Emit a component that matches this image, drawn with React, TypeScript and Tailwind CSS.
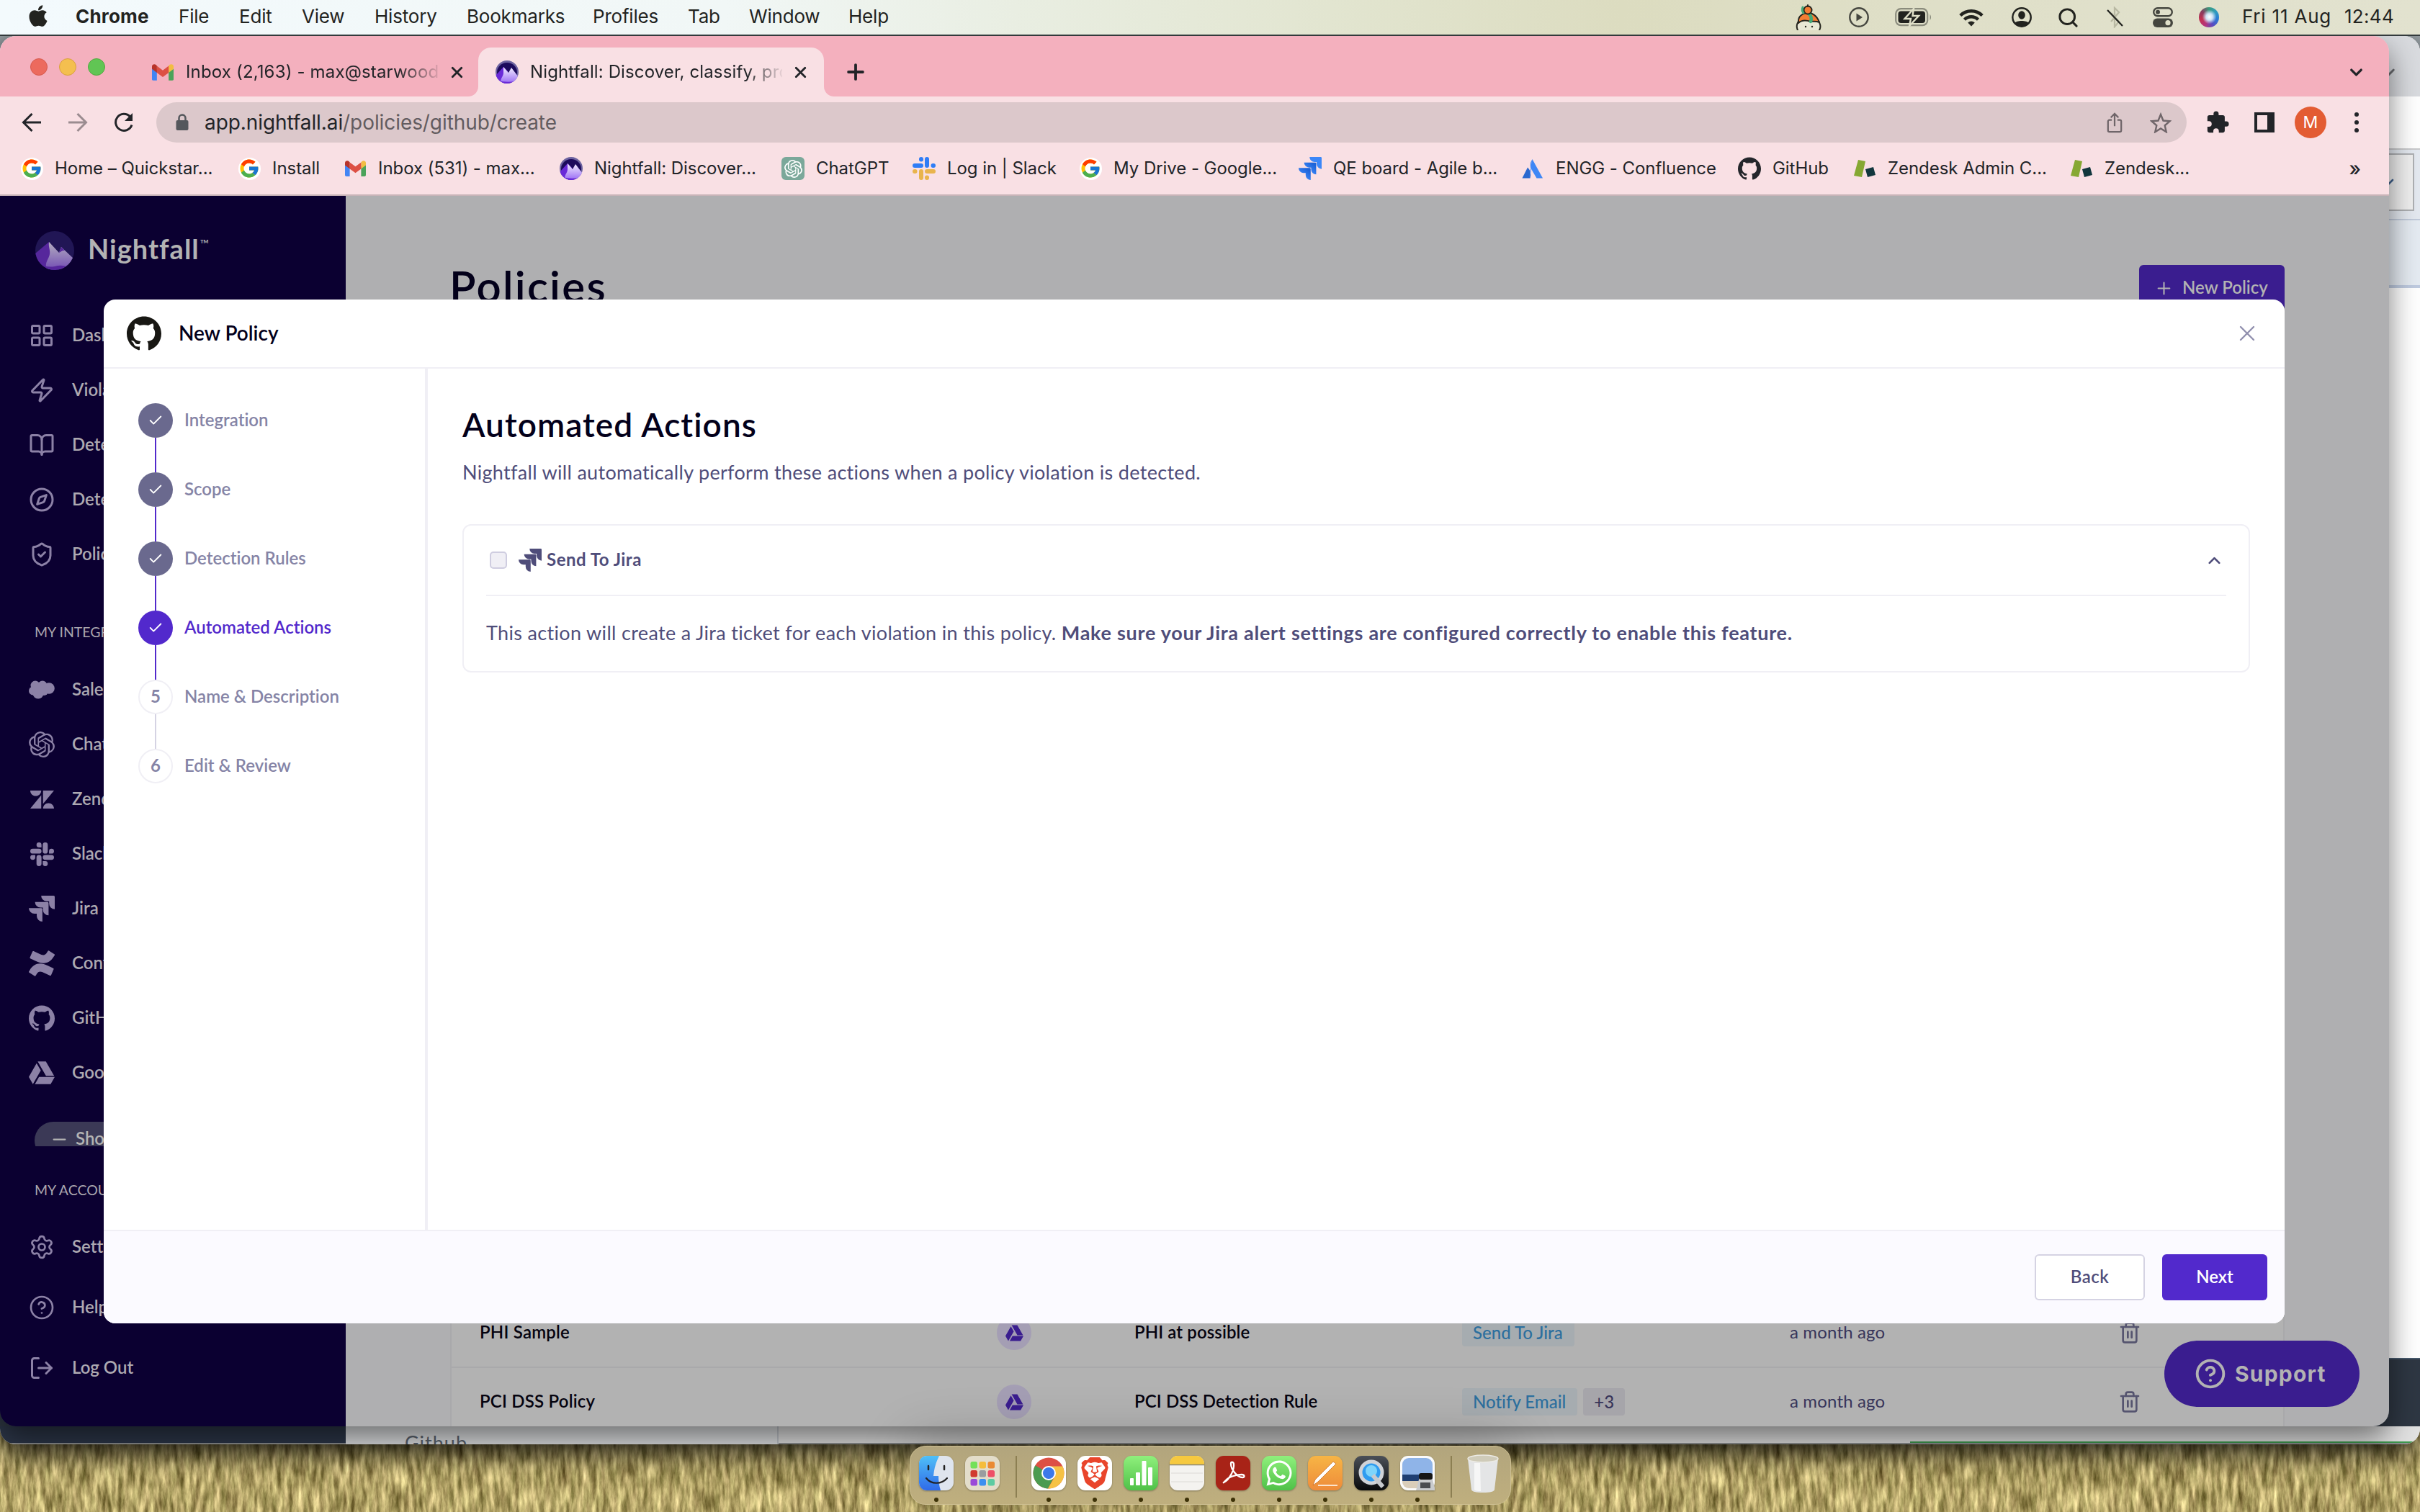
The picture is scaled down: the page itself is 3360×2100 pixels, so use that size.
import React from "react";
import {
  LayoutGrid, Zap, BookOpen, Compass, ShieldCheck, Settings, CircleHelp, LogOut,
  X, Check, Plus, Trash2, ChevronUp, ChevronDown, Search, Minus,
} from "lucide-react";
import { FcGoogle } from "react-icons/fc";
import { FaApple, FaWhatsapp, FaGoogleDrive } from "react-icons/fa";
import { SiZendesk, SiOpenai, SiBrave, SiConfluence, SiGithub, SiSlack } from "react-icons/si";

type IconProps = { className?: string };

/* ---------- logos ---------- */

const JIRA = [
  "M23.013 0H11.455a5.215 5.215 0 0 0 5.215 5.215h2.129v2.057A5.215 5.215 0 0 0 24 12.483V1.005A1.001 1.001 0 0 0 23.013 0Z",
  "M17.294 5.757H5.736a5.215 5.215 0 0 0 5.215 5.214h2.129v2.058a5.218 5.218 0 0 0 5.215 5.214V6.758a1.001 1.001 0 0 0-1.001-1.001z",
  "M11.571 11.513H0a5.218 5.218 0 0 0 5.232 5.215h2.13v2.057A5.215 5.215 0 0 0 12.575 24V12.518a1.005 1.005 0 0 0-1.005-1.005z",
];

const JiraMono = ({ className }: IconProps) => (
  <svg viewBox="0 0 24 24" className={className} fill="currentColor">
    {JIRA.map((d) => <path key={d} d={d} />)}
  </svg>
);

const JiraBlue = ({ className }: IconProps) => (
  <svg viewBox="0 0 24 24" className={className}>
    <defs>
      <linearGradient id="jira-blue" x1="0.9" y1="0" x2="0.3" y2="0.7">
        <stop offset="0.2" stopColor="#1d63d8" />
        <stop offset="1" stopColor="#3b87f8" />
      </linearGradient>
    </defs>
    <path d={JIRA[0]} fill="#3b87f8" />
    <path d={JIRA[1]} fill="url(#jira-blue)" />
    <path d={JIRA[2]} fill="url(#jira-blue)" />
  </svg>
);

const Gmail = ({ className }: IconProps) => (
  <svg viewBox="0 0 32 24" className={className}>
    <path d="M0 4v17.5A2.2 2.2 0 0 0 2.200 24H7.300V9.500z" fill="#4285f4" />
    <path d="M32 4v17.500a2.200 2.200 0 0 1-2.200 2.500H24.700V9.500z" fill="#4ba35a" />
    <path d="M24.700 2.500V12.500L32 7V3.500C32 .3 28.400-.9 26 .9z" fill="#f2bd42" />
    <path d="M7.300 12.500V2.500L16 9l8.700-6.500v10L16 19z" fill="#dd5044" />
    <path d="M0 3.500V7l7.300 5.500v-10L6 .9C3.500-.9 0 .3 0 3.500z" fill="#b8332a" />
  </svg>
);

const GoogleBadge = () => (
  <div className="flex size-[31px] items-center justify-center rounded-full bg-white">
    <FcGoogle className="size-[30px]" />
  </div>
);

const NightfallBadge = ({ className }: IconProps) => (
  <svg viewBox="0 0 32 32" className={className}>
    <defs>
      <clipPath id="nf-round"><circle cx="16" cy="16" r="16" /></clipPath>
      <linearGradient id="nf-peak" x1="0" y1="0" x2="0" y2="1">
        <stop offset="0" stopColor="#f3efff" />
        <stop offset="1" stopColor="#a175f5" />
      </linearGradient>
    </defs>
    <g clipPath="url(#nf-round)">
      <rect width="32" height="32" fill="#6d63a0" />
      <circle cx="16" cy="17" r="14" fill="#1c0a5c" />
      <path d="M0 21 11 9l6 6v17H0z" fill="#6a2ad8" />
      <path d="M11 9l7 8 4-7 10 13v7H7c0-6 4-8 4-13z" fill="url(#nf-peak)" />
      <path d="M4 28q10 3 24 1l-4 4H8z" fill="#6a2ad8" />
    </g>
  </svg>
);

const NightfallDim = ({ className }: IconProps) => (
  <svg viewBox="0 0 54 54" className={className}>
    <defs>
      <clipPath id="nfd-round"><circle cx="27" cy="27" r="27" /></clipPath>
      <linearGradient id="nfd-peak" x1="0" y1="0" x2="0" y2="1">
        <stop offset="0" stopColor="#b3aebf" />
        <stop offset="1" stopColor="#7450b4" />
      </linearGradient>
    </defs>
    <g clipPath="url(#nfd-round)">
      <rect width="54" height="54" fill="#211655" />
      <path d="M0 31 19 15l10 12v27H0z" fill="#56279c" />
      <path d="M19 15l14 15 3-8 18 17-5 14H16c-4-9 3-14 4-21 1-6-2-9-1-17z" fill="url(#nfd-peak)" />
      <path d="M33 30l3-8 5 5-3 0z" fill="#56279c" />
      <path d="M5 45q10 6 22 4 10-3 18 1l-6 6H12z" fill="#56279c" />
    </g>
  </svg>
);

const OpenAiBadge = () => (
  <div className="flex size-8 items-center justify-center rounded-[6px] bg-[#7ba89a] text-white">
    <SiOpenai className="size-[25px]" />
  </div>
);

const SlackTwoTone = () => (
  <svg viewBox="0 0 32 32" className="size-8">
    <g fill="#2f7df6">
      <rect x="9" y="0" width="6" height="6.500" rx="3" />
      <rect x="17" y="0" width="6" height="15" rx="3" />
      <rect x="0" y="9" width="15" height="6" rx="3" />
      <rect x="25.500" y="9" width="6.500" height="6" rx="3" />
    </g>
    <g fill="#e9b44c">
      <rect x="0" y="17" width="6.500" height="6" rx="3" />
      <rect x="9" y="17" width="6" height="15" rx="3" />
      <rect x="17" y="17" width="15" height="6" rx="3" />
      <rect x="17" y="25.500" width="6" height="6.500" rx="3" />
    </g>
  </svg>
);

const Atlassian = () => (
  <svg viewBox="0 0 32 32" className="size-8">
    <path d="M15.500 3 30 29.500H21.500L13 15z" fill="#3f87f5" />
    <path d="M9 14.500q6 6 3.500 15H1.500z" fill="#2a68cf" />
    <path d="M15.500 3 13 8q-1 5 1 10l-3 11.500z" fill="#3f87f5" />
  </svg>
);

const ZendeskLeaf = () => (
  <svg viewBox="0 0 32 32" className="size-8">
    <path d="M7 4 17 6 12 28 1 26z" fill="#86a832" />
    <path d="M17 17 28 14 31 25 20 28z" fill="#12373d" />
  </svg>
);

const Cloud = ({ className }: IconProps) => (
  <svg viewBox="0 0 36 26" className={className} fill="currentColor">
    <circle cx="9" cy="7" r="6.500" /><circle cx="19" cy="7" r="6.500" /><circle cx="28" cy="11" r="7.800" />
    <circle cx="6" cy="14.500" r="6" /><circle cx="13" cy="18" r="7.500" /><circle cx="21" cy="15" r="6" />
    <rect x="8" y="6" width="20" height="12" />
  </svg>
);

/* ---------- menu bar ---------- */

const MENUS: [string, string][] = [
  ["File", "w-[84px]"], ["Edit", "w-[87px]"], ["View", "w-[101px]"], ["History", "w-[128px]"],
  ["Bookmarks", "w-[175px]"], ["Profiles", "w-[132px]"], ["Tab", "w-[85px]"], ["Window", "w-[138px]"], ["Help", ""],
];

const Keybase = () => (
  <svg viewBox="0 0 36 36" className="h-9 w-9" strokeLinecap="round" strokeLinejoin="round">
    <path d="M3 36c-3-6 0-12 3-15h24c4 4 6 10 3 15" fill="#e9e8d6" stroke="#26261f" strokeWidth="2" />
    <path d="M4 26C3 17 8 14 14 12c8-2 16 4 19 13-5-2-8-1-12-1-6-2-12-3-17 2z" fill="#f47d34" stroke="#26261f" strokeWidth="2" />
    <path d="M18 13c4 3 5 6 3 11" fill="none" stroke="#43a877" strokeWidth="4.500" />
    <circle cx="17" cy="8" r="5.500" fill="#f47d34" stroke="#26261f" strokeWidth="2" />
    <path d="M10 4c-1 3-1 6 1 8" stroke="#43a877" strokeWidth="3" fill="none" />
    <path d="M17 3V1" stroke="#26261f" strokeWidth="2" />
    <circle cx="14" cy="31" r="1.200" fill="#26261f" /><circle cx="23" cy="31" r="1.200" fill="#26261f" />
  </svg>
);

const MenuBar = () => (
  <div className="flex h-[48px] shrink-0 items-center bg-[linear-gradient(90deg,#f3fafd_0%,#f1f7f6_30%,#e9eee2_42%,#e2e5d0_55%,#dcdcc0_67%,#dfdfc8_80%,#e2e2cf_100%)] text-[26px] text-[#22231f]">
    <div className="flex w-[105px] items-center pl-[36px]"><FaApple className="size-[34px] -translate-y-[2px]" /></div>
    <div className="w-[143px] pb-[3px] font-bold tracking-[0.2px]">Chrome</div>
    {MENUS.map(([label, width]) => (
      <div key={label} className={`${width} pb-[3px] tracking-[-0.2px]`}>{label}</div>
    ))}
    <div className="ml-auto flex items-center pr-[36px]">
      <Keybase />
      <svg viewBox="0 0 28 28" className="ml-[38px] size-7">
        <circle cx="14" cy="14" r="12.700" fill="none" stroke="#45463f" strokeWidth="2.400" />
        <path d="M10.500 8.500v11L19 14z" fill="#45463f" />
      </svg>
      <svg viewBox="0 0 51 26" className="ml-9 h-[26px] w-[51px]">
        <rect x="1.200" y="1.200" width="44" height="23" rx="7" fill="none" stroke="#8a8b7c" strokeWidth="2.200" />
        <rect x="4.500" y="4.500" width="37.500" height="16.500" rx="4" fill="#22231f" />
        <path d="M48.500 9v8c2-1.500 2-6.500 0-8z" fill="#8a8b7c" />
        <path d="M26 1 13.500 15H22L20 25 33 11H24.500z" fill="#22231f" stroke="#dfdfc8" strokeWidth="2.400" />
      </svg>
      <svg viewBox="0 0 34 25" className="ml-[38px] h-[25px] w-[34px]" fill="none" stroke="#22231f" strokeWidth="4.400">
        <path d="M1.800 9.500a21.500 21.500 0 0 1 30.400 0" />
        <path d="M7.500 15.200a13.500 13.500 0 0 1 19 0" />
        <path d="M17 24.500l-4.800-5a7 7 0 0 1 9.600 0z" fill="#22231f" stroke="none" />
      </svg>
      <svg viewBox="0 0 28 28" className="ml-[39px] size-7">
        <circle cx="14" cy="14" r="12.700" fill="none" stroke="#22231f" strokeWidth="2.500" />
        <ellipse cx="14" cy="11" rx="4.800" ry="5.800" fill="#22231f" />
        <path d="M4 22c3-4 17-4 20 0-4 7-16 7-20 0z" fill="#22231f" />
      </svg>
      <Search className="ml-[35px] size-[31px]" strokeWidth={2.300} />
      <svg viewBox="0 0 24 30" className="ml-[38px] h-[30px] w-6" fill="none">
        <path d="M6 9l11 12-6 7V2l6 6L6 21" stroke="#b9b9a3" strokeWidth="2.300" />
        <path d="M1 5l21 22" stroke="#22231f" strokeWidth="2.300" />
      </svg>
      <svg viewBox="0 0 28 28" className="ml-[40px] size-7">
        <rect x="1.200" y="1.200" width="25.600" height="11" rx="5.500" fill="none" stroke="#45463f" strokeWidth="2.400" />
        <circle cx="7" cy="6.700" r="3" fill="#45463f" />
        <rect x="0" y="15.500" width="28" height="12.500" rx="6.200" fill="#45463f" />
        <circle cx="21" cy="21.700" r="3.600" fill="#dfdfc8" />
      </svg>
      <div className="ml-9 size-7 rounded-full bg-[radial-gradient(circle_at_52%_48%,#ffffff_0%,#cfe3f5_22%,transparent_48%),conic-gradient(from_0deg,#3b9b7d,#2d9cc0,#2a7ad6,#5a4ac0,#b5347c,#c3304f,#8a3a5f,#3b9b7d)]" />
      <div className="ml-[32px] w-[142px] pb-[3px] tracking-[0.8px]">Fri 11 Aug</div>
      <div className="pb-[3px] tracking-[0.3px]">12:44</div>
    </div>
  </div>
);

/* ---------- browser chrome ---------- */

const TabStrip = () => (
  <div className="flex h-[84px] shrink-0 items-end bg-[#f4b0be] text-[24px] text-[#222428]">
    <div className="flex h-[68px] w-[211px] items-center gap-[16px] pb-[14px] pl-[42px]">
      <div className="size-6 rounded-full border border-[#d65a4e] bg-[#ec6a5e]" />
      <div className="size-6 rounded-full border border-[#d9a03f] bg-[#f4bf4f]" />
      <div className="size-6 rounded-full border border-[#52a840] bg-[#61c554]" />
    </div>
    <div className="flex h-[68px] w-[453px] items-center">
      <Gmail className="h-[23px] w-[30px]" />
      <div className="ml-[17px] w-[351px] overflow-hidden whitespace-nowrap tracking-[0.16px] [mask-image:linear-gradient(to_right,black_84%,transparent_102%)]">Inbox (2,163) - max@starwood</div>
      <X className="ml-[13px] size-[25px]" strokeWidth={2.700} />
    </div>
    <div className="relative flex h-[68px] w-[480px] items-center rounded-t-[18px] bg-[#f9e0e4] pl-[24px]">
      <svg viewBox="0 0 14 14" className="absolute bottom-0 -left-[14px] size-[14px]"><path d="M14 0v14H0A14 14 0 0 0 14 0z" fill="#f9e0e4" /></svg>
      <svg viewBox="0 0 14 14" className="absolute -right-[14px] bottom-0 size-[14px]"><path d="M0 0v14h14A14 14 0 0 1 0 0z" fill="#f9e0e4" /></svg>
      <NightfallBadge className="size-8" />
      <div className="ml-[16px] w-[350px] overflow-hidden whitespace-nowrap tracking-[0.12px] [mask-image:linear-gradient(to_right,black_86%,transparent_101%)]">Nightfall: Discover, classify, pro</div>
      <X className="ml-[13px] size-[25px]" strokeWidth={2.700} />
    </div>
    <div className="flex h-[68px] flex-1 items-center justify-between pr-[32px] pl-[27px]">
      <Plus className="size-[34px]" strokeWidth={2.700} />
      <ChevronDown className="size-[27px]" strokeWidth={3} />
    </div>
  </div>
);

const AddressBar = () => (
  <div className="flex h-[72px] shrink-0 items-center bg-[#f9e0e4] text-[#222428]">
    <div className="flex w-[217px] items-center pl-[30px]" >
      <svg viewBox="0 0 28 28" className="size-7" fill="none" stroke="#222428" strokeWidth="3"><path d="M27 14H3M14.500 2 2.500 14l12 12" /></svg>
      <svg viewBox="0 0 28 28" className="ml-9 size-7" fill="none" stroke="#9b8c90" strokeWidth="3"><path d="M1 14h24M13.500 2l12 12-12 12" /></svg>
      <svg viewBox="0 0 28 28" className="ml-9 size-7" fill="none" stroke="#222428" strokeWidth="3"><path d="M25 17.500A11.500 11.500 0 1 1 22.500 6" /><path d="M26 1v11H15z" fill="#222428" stroke="none" /></svg>
    </div>
    <div className="flex h-[56px] w-[2819px] items-center rounded-full bg-[#dcc8cb] pr-[21px] pl-[27px] text-[28px]">
      <svg viewBox="0 0 18 24" className="mr-[22px] h-[24px] w-[18px]"><rect x="0.500" y="9" width="17" height="14" rx="2" fill="#54575c" /><path d="M4.500 10V6a4.500 4.500 0 0 1 9 0v4" fill="none" stroke="#54575c" strokeWidth="2.500" /></svg>
      <div className="tracking-[-0.08px]">app.nightfall.ai<span className="text-[#635c60]">/policies/github/create</span></div>
      <svg viewBox="0 0 22 30" className="ml-auto h-[29px] w-[22px]" fill="none" stroke="#6f6569" strokeWidth="2.300"><path d="M7 11H3.500A2 2 0 0 0 1.500 13v13a2 2 0 0 0 2 2h15a2 2 0 0 0 2-2V13a2 2 0 0 0-2-2H15M11 20V3M5.500 7.500 11 2l5.500 5.500" /></svg>
      <svg viewBox="0 0 30 29" className="ml-[38px] h-[29px] w-[30px]" fill="none" stroke="#6f6569" strokeWidth="2.400"><path d="M15 3l3.500 8.500 9 .8-6.800 6 2 8.900L15 22.500l-7.700 4.700 2-8.900-6.800-6 9-.8z" /></svg>
    </div>
    <svg viewBox="0 0 24 24" className="ml-[26px] size-[34px]" fill="#222428"><path d="M20.500 11H19V7a2 2 0 0 0-2-2h-4V3.500a2.500 2.500 0 0 0-5 0V5H4a2 2 0 0 0-2 2v3.800h1.500a2.700 2.700 0 0 1 0 5.400H2V20a2 2 0 0 0 2 2h3.800v-1.500a2.700 2.700 0 0 1 5.400 0V22H17a2 2 0 0 0 2-2v-4h1.500a2.500 2.500 0 0 0 0-5z" /></svg>
    <svg viewBox="0 0 28 28" className="ml-[34px] size-7"><path d="M0 0h28v28H0zM4 4v20h14V4z" fill="#222428" fillRule="evenodd" /></svg>
    <div className="ml-[28px] flex size-11 items-center justify-center rounded-full bg-[#e35c33] text-[23px] text-white">M</div>
    <div className="ml-[39px] flex flex-col gap-[5px]">
      <div className="size-[6px] rounded-full bg-[#222428]" />
      <div className="size-[6px] rounded-full bg-[#222428]" />
      <div className="size-[6px] rounded-full bg-[#222428]" />
    </div>
  </div>
);

const BOOKMARKS: { label: string; icon: React.ReactNode; width: string }[] = [
  { label: "Home – Quickstar...", icon: <GoogleBadge />, width: "w-[302px]" },
  { label: "Install", icon: <GoogleBadge />, width: "w-[147px]" },
  { label: "Inbox (531) - max...", icon: <Gmail className="h-[22px] w-[29px]" />, width: "w-[300px]" },
  { label: "Nightfall: Discover...", icon: <NightfallBadge className="size-8" />, width: "w-[308px]" },
  { label: "ChatGPT", icon: <OpenAiBadge />, width: "w-[182px]" },
  { label: "Log in | Slack", icon: <SlackTwoTone />, width: "w-[231px]" },
  { label: "My Drive - Google...", icon: <GoogleBadge />, width: "w-[305px]" },
  { label: "QE board - Agile b...", icon: <JiraBlue className="size-8" />, width: "w-[309px]" },
  { label: "ENGG - Confluence", icon: <Atlassian />, width: "w-[301px]" },
  { label: "GitHub", icon: <SiGithub className="size-8 text-[#24262b]" />, width: "w-[160px]" },
  { label: "Zendesk Admin C...", icon: <ZendeskLeaf />, width: "w-[301px]" },
  { label: "Zendesk...", icon: <ZendeskLeaf />, width: "w-[200px]" },
];

const BookmarkBar = () => (
  <div className="flex h-[66px] shrink-0 items-center border-b-2 border-[#c9b4b8] bg-[#f9e0e4] pb-[8px] pl-[28px] text-[24px] tracking-[-0.05px] text-[#222428]">
    {BOOKMARKS.map((b) => (
      <div key={b.label} className={`${b.width} flex shrink-0 items-center gap-[16px] whitespace-nowrap`}>
        <div className="flex w-8 justify-center">{b.icon}</div>
        {b.label}
      </div>
    ))}
    <div className="ml-auto pr-[39px] text-[27px] leading-none font-medium">»</div>
  </div>
);

/* ---------- app behind the dialog ---------- */

const SideItem = ({ icon, label, height }: { icon: React.ReactNode; label: string; height: string }) => (
  <div className={`${height} flex items-center whitespace-nowrap text-[24px] font-semibold text-[#ada9b1]`}>
    <div className="flex w-[100px] justify-start pl-10"><div className="flex w-9 justify-center text-[#8c81a6]">{icon}</div></div>
    <div className="pb-0.5">{label}</div>
  </div>
);

const Sidebar = () => (
  <div className="flex w-[480px] shrink-0 flex-col bg-[#0b0031] font-[Lato]">
    <div className="flex h-[156px] items-center pb-1 pl-[49px]">
      <NightfallDim className="size-[54px] shrink-0" />
      <div className="ml-[19px] pb-1.5 text-[38px] font-bold tracking-[1px] text-[#b3b3b3]">Nightfall</div>
      <div className="ml-[1px] pb-[18px] text-[17px] text-[#b3b3b3]">™</div>
    </div>
    <SideItem height="h-[76px]" icon={<LayoutGrid className="size-9" />} label="Dashboard" />
    <SideItem height="h-[76px]" icon={<Zap className="size-9" />} label="Violations" />
    <SideItem height="h-[76px]" icon={<BookOpen className="size-9" />} label="Detection Rules" />
    <SideItem height="h-[76px]" icon={<Compass className="size-9" />} label="Detectors" />
    <SideItem height="h-[76px]" icon={<ShieldCheck className="size-9" />} label="Policies" />
    <div className="flex h-[112px] items-center pt-[27px] pl-[48px] text-[19.500px] text-[#aaa6ae]">MY INTEGRATIONS</div>
    <SideItem height="h-[76px]" icon={<Cloud className="h-[26px] w-9" />} label="Salesforce" />
    <SideItem height="h-[76px]" icon={<SiOpenai className="size-9" />} label="ChatGPT" />
    <SideItem height="h-[76px]" icon={<SiZendesk className="size-[33px]" />} label="Zendesk" />
    <SideItem height="h-[76px]" icon={<SiSlack className="size-[33px]" />} label="Slack" />
    <SideItem height="h-[76px]" icon={<JiraMono className="size-9" />} label="Jira" />
    <SideItem height="h-[76px]" icon={<SiConfluence className="size-9" />} label="Confluence" />
    <SideItem height="h-[76px]" icon={<SiGithub className="size-9" />} label="GitHub" />
    <SideItem height="h-[76px]" icon={<FaGoogleDrive className="size-9" />} label="Google Drive" />
    <div className="mt-[30px] ml-[48px] h-[34px] w-[380px] overflow-hidden">
      <div className="flex h-[52px] items-center rounded-full bg-[#3b3956] pl-[21px] text-[24px] font-semibold text-[#b3b3b3]">
        <Minus className="mr-[9px] size-[27px] -translate-y-[2px]" strokeWidth={2} />
        <div className="pb-1.5">Show less</div>
      </div>
    </div>
    <div className="flex h-[98px] items-center pt-[24px] pl-[48px] text-[19.500px] text-[#aaa6ae]">MY ACCOUNT</div>
    <SideItem height="h-[84px]" icon={<Settings className="size-9" strokeWidth={1.800} />} label="Settings" />
    <SideItem height="h-[84px]" icon={<CircleHelp className="size-9" strokeWidth={1.800} />} label="Help Center" />
    <SideItem height="h-[84px]" icon={<LogOut className="size-9" />} label="Log Out" />
  </div>
);

const PolicyRow = ({ name, rule, action, extra }: { name: string; rule: string; action: string; extra?: string }) => (
  <div className="grid h-[96px] shrink-0 grid-cols-[718px_191px_455px_455px_456px_1fr] items-center border-r-2 border-b-2 border-l-2 border-[#a9a9ab] bg-[#b2b2b2] pl-[39px] text-[24px] whitespace-nowrap">
    <div className="pb-0.5 font-semibold tracking-[0.2px] text-[#05030f]">{name}</div>
    <div className="flex size-12 items-center justify-center rounded-full bg-[#a49eb4] text-[#3a1d8f]"><FaGoogleDrive className="size-[25px]" /></div>
    <div className="pb-0.5 font-semibold tracking-[0.1px] text-[#05030f]">{rule}</div>
    <div className="flex gap-2">
      <div className="flex h-[38px] items-center rounded-[4px] bg-[#a6acb0] pr-4 pb-px pl-[15px] font-medium text-[#2c6f9e]">{action}</div>
      {extra && <div className="flex h-[38px] items-center rounded-[4px] bg-[#a6a5aa] px-[15px] pb-px font-medium text-[#37355a]">{extra}</div>}
    </div>
    <div className="pb-0.5 tracking-[0.15px] text-[#37355a]">a month ago</div>
    <Trash2 className="size-[32px] text-[#55546f]" strokeWidth={2} />
  </div>
);

const PoliciesPage = () => (
  <div className="flex flex-1 flex-col overflow-hidden bg-[#afafb1] font-[Lato]">
    <div className="flex h-[1532px] shrink-0 items-start justify-between pt-[96px] pr-[145px] pl-[144px]">
      <div className="text-[60px] leading-[58px] font-semibold tracking-[2.300px] text-[#03001a]">Policies</div>
      <div className="flex h-[64px] w-[202px] items-center rounded-[6px] bg-[#3a1d8f] pl-[21px] text-[24px] font-semibold text-[#b3b3b3]">
        <Plus className="size-[27px]" strokeWidth={1.800} />
        <div className="ml-[12px] pb-0.5 whitespace-nowrap">New Policy</div>
      </div>
    </div>
    <div className="mr-[145px] ml-[145px]">
      <PolicyRow name="PHI Sample" rule="PHI at possible" action="Send To Jira" />
      <PolicyRow name="PCI DSS Policy" rule="PCI DSS Detection Rule" action="Notify Email" extra="+3" />
    </div>
  </div>
);

/* ---------- dialog ---------- */

const STEPS = [
  { label: "Integration", state: "done" },
  { label: "Scope", state: "done" },
  { label: "Detection Rules", state: "done" },
  { label: "Automated Actions", state: "current" },
  { label: "Name & Description", state: "todo" },
  { label: "Edit & Review", state: "todo" },
];

const circleStyle: Record<string, string> = {
  done: "bg-[#6a698e] text-white",
  current: "bg-[#5229cc] text-white",
  todo: "border-2 border-[#f0eff5] bg-white text-[#8584a6]",
};

const Dialog = () => (
  <div className="absolute top-[416px] left-[144px] flex h-[1422px] w-[3028px] flex-col overflow-hidden rounded-[16px] bg-white font-[Lato]">
    <div className="flex h-[96px] shrink-0 items-center border-b-2 border-[#f0eff5] pr-[34px] pl-[32px]">
      <SiGithub className="size-[48px] text-[#181713]" />
      <div className="ml-[24px] pb-0.5 text-[28px] font-semibold text-[#03001a]">New Policy</div>
      <X className="ml-auto size-[36px] text-[#9190ae]" strokeWidth={1.600} />
    </div>
    <div className="flex flex-1">
      <div className="flex w-[450px] shrink-0 flex-col border-r-4 border-[#f0eff5] pt-[48px] pl-[48px]">
        {STEPS.map((s, i) => (
          <div key={s.label} className="flex">
            <div className="flex w-[48px] flex-col items-center">
              <div className={`${circleStyle[s.state]} flex size-[48px] items-center justify-center rounded-full text-[24px] font-bold`}>
                {s.state === "todo" ? <span className="pb-0.5">{i + 1}</span> : <Check className="size-[22px]" strokeWidth={2} />}
              </div>
              {i < 5 && <div className={`${i < 4 ? "bg-[#5229cc]" : "bg-[#d5d3e3]"} h-[48px] w-[2px]`} />}
            </div>
            <div className={`${s.state === "current" ? "text-[#5229cc]" : "text-[#8584a6]"} ml-[16px] flex h-[48px] items-center pb-0.5 text-[24px] font-semibold whitespace-nowrap`}>{s.label}</div>
          </div>
        ))}
      </div>
      <div className="flex-1 pt-[50px] pr-[48px] pl-[48px]">
        <div className="text-[46px] leading-[56px] font-semibold tracking-[1.050px] text-[#03001a]">Automated Actions</div>
        <div className="mt-[20px] text-[27px] leading-[36px] tracking-[0.310px] text-[#4f4d7a]">Nightfall will automatically perform these actions when a policy violation is detected.</div>
        <div className="mt-[54px] h-[206px] rounded-[12px] border-2 border-[#f0eff5] px-[31px] text-[#4f4d7a]">
          <div className="flex h-[98px] items-center border-b-2 border-[#f0eff5] pr-[3px] pl-[5px]">
            <div className="size-[24px] rounded-[5px] border-2 border-[#cfcde0] bg-[#f0eff5]" />
            <JiraMono className="ml-4 size-8" />
            <div className="ml-[7px] pb-0.5 text-[24px] font-bold tracking-[0.500px]">Send To Jira</div>
            <ChevronUp className="ml-auto size-[27px]" strokeWidth={2.400} />
          </div>
          <div className="pt-[33px] text-[27px] leading-[36px] tracking-[0.330px] whitespace-nowrap">
            This action will create a Jira ticket for each violation in this policy.{" "}
            <span className="font-bold tracking-[0.720px]">Make sure your Jira alert settings are configured correctly to enable this feature.</span>
          </div>
        </div>
      </div>
    </div>
    <div className="flex h-[130px] shrink-0 items-start justify-end gap-[24px] border-t-2 border-[#f0eff5] bg-[#fbfaff] pt-[32px] pr-[24px] text-[24px] font-semibold">
      <div className="flex h-[64px] w-[153px] items-center justify-center rounded-[6px] border-2 border-[#d5d3e3] bg-white pb-0.5 tracking-[0.500px] text-[#4f4d7a]">Back</div>
      <div className="flex h-[64px] w-[146px] items-center justify-center rounded-[6px] bg-[#5229cc] pb-0.5 text-white">Next</div>
    </div>
  </div>
);

/* ---------- dock ---------- */

const Squircle = ({ children, fill }: { children?: React.ReactNode; fill: string }) => (
  <svg viewBox="0 0 48 48" className="size-[48px] shrink-0 drop-shadow-[0_1px_1px_rgba(0,0,0,0.3)]">
    <rect width="48" height="48" rx="11" fill={fill} />
    {children}
  </svg>
);

const LAUNCHPAD = ["#74e05a", "#f5bd3c", "#ea8a34", "#d03a30", "#9a9da0", "#ee4f67", "#9a4ad8", "#3b8ff0", "#5ccba2"];

const DOCK_APPS: React.ReactNode[] = [
  <Squircle fill="#ffffff">
    <circle cx="24" cy="24" r="21.500" fill="#dd5044" />
    <path d="M24 24 5.400 13.300A21.500 21.500 0 0 0 23 45.500l9-17z" fill="#4b9b50" />
    <path d="M24 14.500h19.300A21.500 21.500 0 0 1 23 45.500L33 28z" fill="#f6c244" />
    <circle cx="24" cy="24" r="10" fill="#fff" /><circle cx="24" cy="24" r="8" fill="#3c78e8" />
  </Squircle>,
  <Squircle fill="#ffffff"><SiBrave x={2} y={2} color="#e9452b" size={44} /></Squircle>,
  <Squircle fill="url(#dock-green)">
    <g fill="#fff"><rect x="9" y="31" width="5" height="10" rx="1" /><rect x="17" y="23" width="6" height="18" rx="1" /><rect x="25.500" y="7" width="6" height="34" rx="1" /><rect x="34" y="16" width="6" height="25" rx="1" /></g>
  </Squircle>,
  <Squircle fill="#f4f3f0">
    <path d="M0 12V11A11 11 0 0 1 11 0H37A11 11 0 0 1 48 11v1z" fill="#f6c93f" />
    <path d="M0 12.500h48" stroke="#8a8776" strokeWidth="1.500" /><path d="M2 24h44M2 36h44" stroke="#dcdad6" />
  </Squircle>,
  <Squircle fill="#a82317">
    <path d="M11 37c8-4 15-17 14-26-1-3-4-3-4 0 0 8 9 19 16 19 4 0 3-4-1-4-9 0-19 4-22 8-2 2-4 4-3 3z" fill="none" stroke="#fff" strokeWidth="2.300" />
  </Squircle>,
  <Squircle fill="url(#dock-green)"><FaWhatsapp x={4} y={4} size={40} color="#ffffff" /></Squircle>,
  <Squircle fill="url(#dock-orange)">
    <path d="M7 41 10 33 35 8l4 3L14 36z" fill="#fff" stroke="#c96f25" strokeWidth="0.800" /><path d="M14 41h27" stroke="#fff" strokeWidth="1.500" />
  </Squircle>,
  <Squircle fill="url(#dock-dark)">
    <circle cx="24" cy="23" r="15" fill="#2f9cf0" stroke="#d0d3d8" strokeWidth="5" />
    <circle cx="24" cy="21" r="8" fill="#7ed4fb" /><path d="M26 27 40 43" stroke="#c6c9ce" strokeWidth="6" />
  </Squircle>,
  <Squircle fill="#fbfbfb">
    <path d="M3 12a9 9 0 0 1 9-9h24a9 9 0 0 1 9 9v15H3z" fill="#8fb4e8" /><rect x="3" y="26" width="42" height="9" fill="#1f3f73" />
    <path d="M3 35h30l-8 10H12a9 9 0 0 1-9-9z" fill="#d9cdb9" />
    <path d="M27 25h17l1 8 4 15H22l4-15z" fill="#c9cbcd" /><rect x="26" y="24" width="19" height="9" rx="3" fill="#161616" /><rect x="28" y="37" width="14" height="8" fill="#4a4c50" />
  </Squircle>,
];

const Dock = () => (
  <div className="absolute top-[2008px] left-[1263px] flex h-[82px] w-[835px] items-start rounded-[22px] border border-[#cdbf92] bg-[linear-gradient(180deg,#b2a57d,#bfaf7e)] pt-[13px] pl-[12px] shadow-[0_-10px_70px_rgba(0,0,0,0.22)]">
    <svg className="absolute size-0">
      <defs>
        <linearGradient id="dock-green" x1="0" y1="0" x2="0" y2="1"><stop stopColor="#8ff07c" /><stop offset="1" stopColor="#4fc148" /></linearGradient>
        <linearGradient id="dock-orange" x1="0" y1="0" x2="0" y2="1"><stop stopColor="#f7b545" /><stop offset="1" stopColor="#ee8b3a" /></linearGradient>
        <linearGradient id="dock-dark" x1="0" y1="0" x2="0" y2="1"><stop stopColor="#4b5058" /><stop offset="1" stopColor="#08090b" /></linearGradient>
        <linearGradient id="dock-blue" x1="0" y1="0" x2="0" y2="1"><stop stopColor="#4fc0f8" /><stop offset="1" stopColor="#2f6ae8" /></linearGradient>
      </defs>
    </svg>
    <div className="flex w-16 flex-col items-start gap-[10px]">
      <Squircle fill="#dfe5ee">
        <path d="M11 0H28C23 10 21 18 20 28h7c0 7 1 14 3 20H11A11 11 0 0 1 0 37V11A11 11 0 0 1 11 0z" fill="url(#dock-blue)" />
        <path d="M13 14v5M35 14v5" stroke="#222" strokeWidth="2.500" strokeLinecap="round" /><path d="M10 31c7 9 21 9 29 0" fill="none" stroke="#222" strokeWidth="2.200" strokeLinecap="round" />
      </Squircle>
      <div className="ml-[21px] size-[6px] rounded-full bg-[#3d3208]" />
    </div>
    <Squircle fill="#e3ddca">
      {LAUNCHPAD.map((c, i) => <rect key={c} x={7.500 + (i % 3) * 12} y={8 + Math.floor(i / 3) * 12} width="9.500" height="9.500" rx="2.500" fill={c} />)}
    </Squircle>
    <div className="mr-[20px] ml-[22px] h-[58px] w-[2px] bg-[#8c7f52]" />
    {DOCK_APPS.map((app, i) => (
      <div key={i} className="flex w-16 flex-col items-start gap-[10px]">
        {app}
        <div className="ml-[21px] size-[6px] rounded-full bg-[#3d3208]" />
      </div>
    ))}
    <div className="mr-[21px] ml-[6px] h-[58px] w-[2px] bg-[#8c7f52]" />
    <svg viewBox="0 0 44 54" className="-mt-[2px] h-[54px] w-[44px]">
      <path d="M1 6h42l-5 43q-1 4-16 4T6 49z" fill="#e4e5e6" /><path d="M10 12h8l1 39q-7 0-9-2z" fill="#f6f6f6" />
      <ellipse cx="22" cy="6" rx="21" ry="5" fill="#cfcbb9" stroke="#eceae4" strokeWidth="1.500" />
    </svg>
  </div>
);

/* ---------- desktop ---------- */

const Wallpaper = () => (
  <div className="absolute top-[1960px] left-0 h-[140px] w-[3360px] bg-[#b5a468]">
    <svg className="h-full w-full">
      <filter id="grass" x="0" y="0" width="100%" height="100%" colorInterpolationFilters="sRGB">
        <feTurbulence type="fractalNoise" baseFrequency="0.140 0.028" numOctaves="5" seed="7" />
        <feColorMatrix values="0.850 0 0 0 0.270  0.820 0.050 0 0 0.200  0.700 0 0 0 0.050  0 0 0 0 1" />
      </filter>
      <rect width="100%" height="100%" filter="url(#grass)" />
    </svg>
  </div>
);

const BackWindow = () => (
  <div className="absolute top-[50px] left-0 flex h-[1956px] w-[3360px] flex-col overflow-hidden rounded-[22px] bg-[#f6f7f8] shadow-[0_14px_36px_rgba(0,0,0,0.75)]">
    <div className="flex h-[84px] shrink-0 items-center justify-end bg-[#d9dbdf] pt-4 pr-[30px] text-[#6a6c70]"><ChevronDown className="size-[27px]" strokeWidth={2.600} /></div>
    <div className="h-[74px] shrink-0 border-b-2 border-[#c8c9cb] bg-white" />
    <div className="h-[98px] shrink-0 border-b-2 border-[#c0cada] bg-[#e4e9f0] pt-[5px] pr-[8px]">
      <div className="flex h-[80px] items-center justify-end border-2 border-[#aeb0b3] bg-[#f0f0f0] pr-[22px] text-[#42648f]"><ChevronDown className="size-[24px]" strokeWidth={2.600} /></div>
    </div>
    <div className="h-[94px] shrink-0 border-b-4 border-[#bfcbe0] bg-[#e5ebf2]" />
    <div className="flex-1 bg-white" />
    <div className="h-[95px] shrink-0 border-t-2 border-[#46586b] bg-[#2e3743]" />
    <div className="flex h-[25px] shrink-0 border-b-2 border-[#8e9092]">
      <div className="w-[480px] bg-[#2c3648]" />
      <div className="h-[25px] w-[601px] overflow-hidden border-r-2 border-[#c2c6cc] bg-[#dfe1e3] pt-[8px] pl-[82px] font-[Lato] text-[27px] leading-[30px] tracking-[1px] text-[#5b6470]">Github</div>
      <div className="flex-1 bg-[#e2e2e2]" />
      <div className="w-[708px] border-b-2 border-[#3f9b50] bg-[#e2e2e2]" />
    </div>
  </div>
);

const BrowserWindow = () => (
  <div className="absolute top-[50px] left-0 h-[1931px] w-[3317px] rounded-[22px] shadow-[0_18px_40px_rgba(0,0,0,0.5)]">
    <div className="flex h-full w-full flex-col overflow-hidden rounded-[22px]">
      <TabStrip />
      <AddressBar />
      <BookmarkBar />
      <div className="flex min-h-0 flex-1 overflow-hidden">
        <Sidebar />
        <PoliciesPage />
      </div>
    </div>
  </div>
);

export default function App() {
  return (
    <div className="relative h-[2100px] w-[3360px] overflow-hidden bg-[#9ba3a8] font-[Inter,sans-serif] [font-variant-ligatures:none]">
      <Wallpaper />
      <BackWindow />
      <BrowserWindow />
      <Dialog />
      <div className="absolute top-[1862px] left-[3005px] flex h-[92px] w-[271px] items-center rounded-full bg-[#3a1d8f] pl-[42px] text-[#b3b3b3]">
        <CircleHelp className="size-[44px]" strokeWidth={2.100} />
        <div className="ml-[12px] text-[30px] font-bold tracking-[1.200px]">Support</div>
      </div>
      <div className="absolute top-0 left-0 w-full border-b-2 border-[#333a3c]"><MenuBar /></div>
      <Dock />
    </div>
  );
}
